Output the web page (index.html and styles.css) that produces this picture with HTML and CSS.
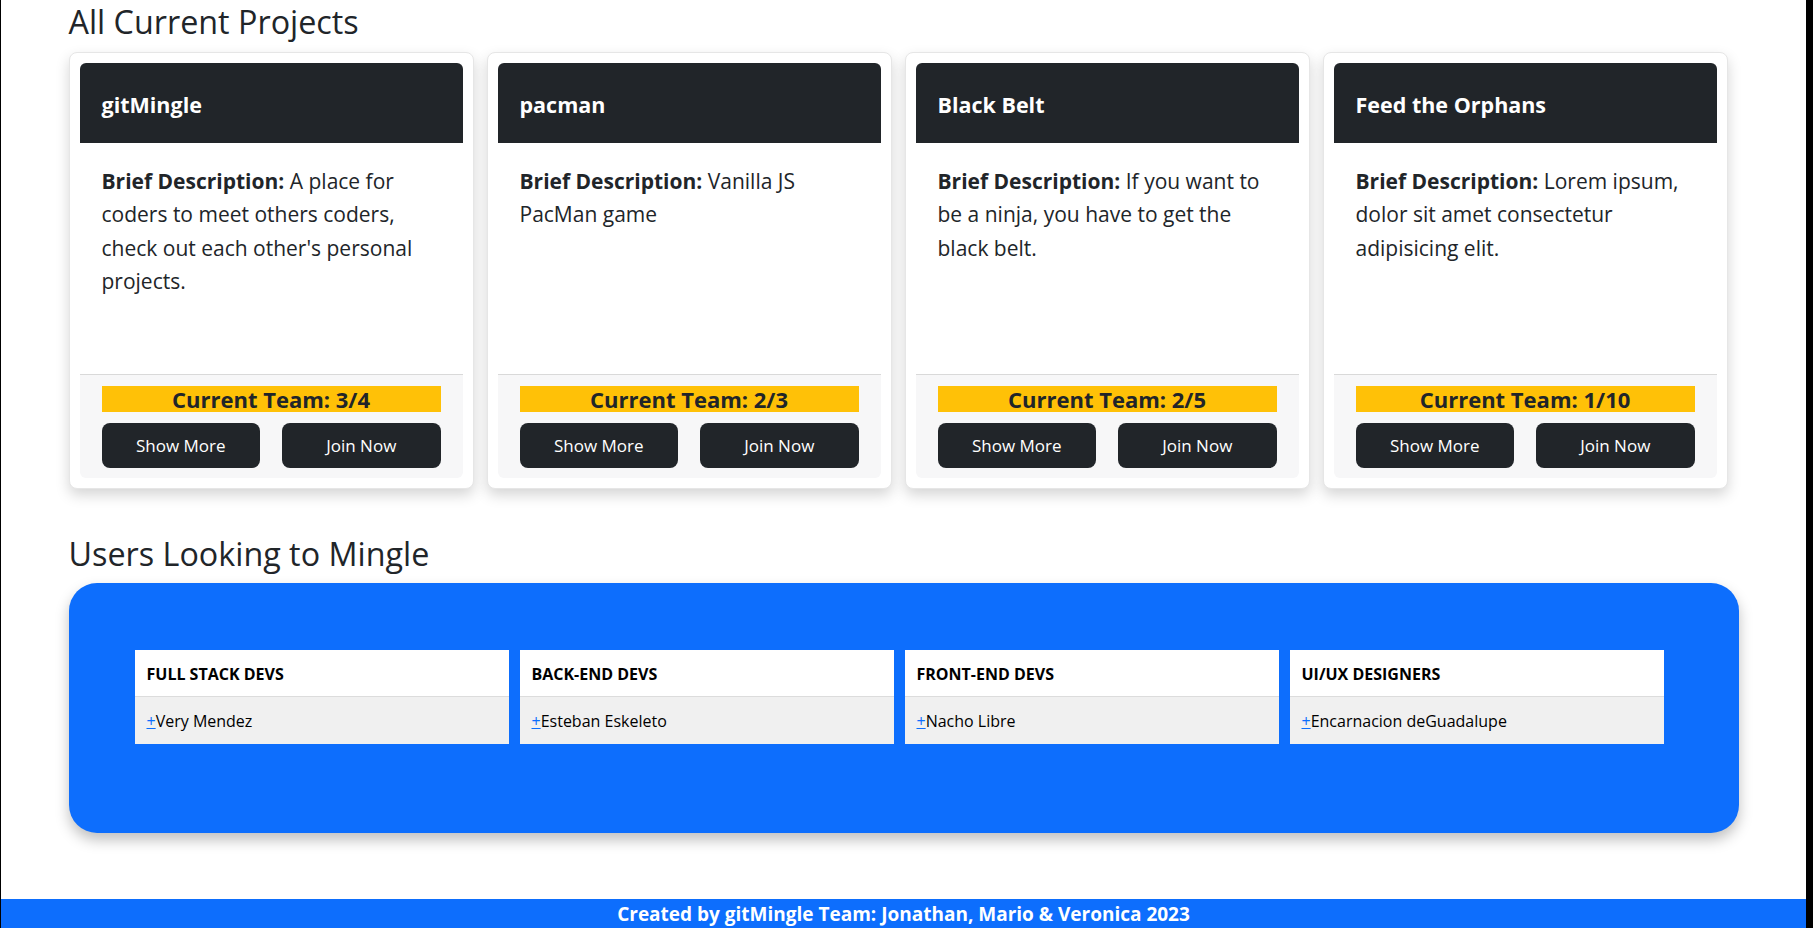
FILE: index.html
```html
<!DOCTYPE html>
<html lang="en">
<head>
<meta charset="utf-8">
<title>gitMingle</title>
<link rel="stylesheet" href="styles.css">
</head>
<body>
<main class="container">
  <h2 class="section-title">All Current Projects</h2>
  <div class="projects">
    <div class="card">
      <div class="card-header"><h5 class="card-title">gitMingle</h5></div>
      <div class="card-body"><p><strong>Brief Description:</strong> A place for coders to meet others coders, check out each other's personal projects.</p></div>
      <div class="card-footer">
        <div class="team">Current Team: 3/4</div>
        <div class="actions"><button class="btn">Show More</button><button class="btn">Join Now</button></div>
      </div>
    </div>
    <div class="card">
      <div class="card-header"><h5 class="card-title">pacman</h5></div>
      <div class="card-body"><p><strong>Brief Description:</strong> Vanilla JS PacMan game</p></div>
      <div class="card-footer">
        <div class="team">Current Team: 2/3</div>
        <div class="actions"><button class="btn">Show More</button><button class="btn">Join Now</button></div>
      </div>
    </div>
    <div class="card">
      <div class="card-header"><h5 class="card-title">Black Belt</h5></div>
      <div class="card-body"><p><strong>Brief Description:</strong> If you want to be a ninja, you have to get the black belt.</p></div>
      <div class="card-footer">
        <div class="team">Current Team: 2/5</div>
        <div class="actions"><button class="btn">Show More</button><button class="btn">Join Now</button></div>
      </div>
    </div>
    <div class="card">
      <div class="card-header"><h5 class="card-title">Feed the Orphans</h5></div>
      <div class="card-body"><p><strong>Brief Description:</strong> Lorem ipsum, dolor sit amet consectetur adipisicing elit.</p></div>
      <div class="card-footer">
        <div class="team">Current Team: 1/10</div>
        <div class="actions"><button class="btn">Show More</button><button class="btn">Join Now</button></div>
      </div>
    </div>
  </div>

  <h2 class="section-title users-title">Users Looking to Mingle</h2>
  <div class="mingle">
    <div class="group">
      <div class="group-head">FULL STACK DEVS</div>
      <div class="group-item"><a href="#" class="add">+</a>Very Mendez</div>
    </div>
    <div class="group">
      <div class="group-head">BACK-END DEVS</div>
      <div class="group-item"><a href="#" class="add">+</a>Esteban Eskeleto</div>
    </div>
    <div class="group">
      <div class="group-head">FRONT-END DEVS</div>
      <div class="group-item"><a href="#" class="add">+</a>Nacho Libre</div>
    </div>
    <div class="group">
      <div class="group-head">UI/UX DESIGNERS</div>
      <div class="group-item"><a href="#" class="add">+</a>Encarnacion deGuadalupe</div>
    </div>
  </div>
</main>
<footer class="site-footer">Created by gitMingle Team: Jonathan, Mario &amp; Veronica 2023</footer>
</body>
</html>
```

FILE: styles.css
```css
* { box-sizing: border-box; }

html { background: #000; }

body {
  margin: 0 7px 0 1px;
  background: #fff;
  min-height: 928px;
  font-family: "Open Sans", "Noto Sans", sans-serif;
  color: #212529;
}

.container {
  width: 1670px;
  margin: 0 auto;
}

.section-title {
  font-size: 32.3px;
  font-weight: 400;
  line-height: 38px;
  margin: 0 0 12px;
  padding-top: 2px;
}

.users-title {
  margin-top: 43px;
  margin-bottom: 11px;
}

.projects {
  display: grid;
  grid-template-columns: repeat(4, 405px);
  gap: 13px;
}

.card {
  background: #fff;
  border: 1px solid #e6e6e6;
  border-radius: 8px;
  padding: 10px;
  box-shadow: 0 6px 14px rgba(0, 0, 0, 0.17);
  display: flex;
  flex-direction: column;
}

.card-header {
  background: #212529;
  color: #fff;
  height: 80px;
  border-radius: 6px 6px 0 0;
  padding: 30px 22px 0;
}

.card-title {
  margin: 0;
  font-size: 21.5px;
  font-weight: 700;
  line-height: 24px;
}

.card-body {
  height: 231px;
  padding: 22px 22px 20px;
}

.card-body p {
  margin: 0;
  font-size: 21px;
  line-height: 33.3px;
}

.card-body strong { font-weight: 700; }

.card-footer {
  background: #f7f7f8;
  border-top: 1px solid #d9d9d9;
  border-radius: 0 0 6px 6px;
  padding: 11px 22px 10px;
  display: flex;
  flex-direction: column;
  gap: 11px;
}

.team {
  background: #ffc107;
  height: 26px;
  text-align: center;
  font-size: 22px;
  font-weight: 700;
  line-height: 26px;
  color: #212529;
}

.actions {
  display: grid;
  grid-template-columns: 1fr 1fr;
  gap: 22px;
}

.btn {
  height: 45px;
  border: 0;
  border-radius: 8px;
  background: #212529;
  color: #fff;
  font-family: inherit;
  font-size: 17px;
  padding: 0;
}

.mingle {
  background: #0d6efd;
  border-radius: 28px;
  height: 250px;
  padding: 67px 0 0 66px;
  display: grid;
  grid-template-columns: repeat(4, 374px);
  gap: 11px;
  align-content: start;
  box-shadow: 0 7px 14px rgba(0, 0, 0, 0.25);
}

.group {
  background: #fff;
}

.group-head {
  padding: 12px 12px 10px;
  font-size: 16px;
  font-weight: 700;
  line-height: 24px;
  color: #000;
  border-bottom: 1px solid #dcdcdc;
}

.group-item {
  background: #f0f0f0;
  padding: 12px 12px 11px;
  font-size: 16px;
  line-height: 24px;
  color: #000;
}

.add {
  color: #0d6efd;
  text-decoration: underline;
}

.site-footer {
  margin-top: 66px;
  background: #0d6efd;
  color: #fff;
  text-align: center;
  font-size: 19px;
  font-weight: 700;
  line-height: 30px;
}
```
